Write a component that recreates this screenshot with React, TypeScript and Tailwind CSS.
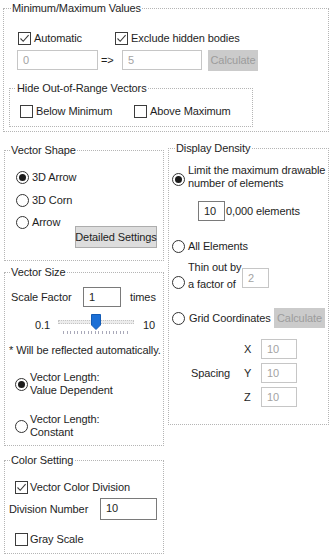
import React from 'react'

const Check = ({ checked }: { checked?: boolean }) => (
  <span className="flex h-[13px] w-[13px] shrink-0 items-center justify-center border border-[#3c3c3c] bg-white">
    {checked && (
      <svg width="11" height="11" viewBox="0 0 11 11">
        <path d="M1.5 5.5 L4.2 8.3 L9.6 2.2" fill="none" stroke="#3c3c3c" strokeWidth="1.1" />
      </svg>
    )}
  </span>
)

const Radio = ({ checked, className = '' }: { checked?: boolean; className?: string }) => (
  <span className={`flex h-[13px] w-[13px] shrink-0 items-center justify-center rounded-full border border-[#333] bg-white ${className}`}>
    {checked && <span className="h-[7px] w-[7px] rounded-full bg-[#1c1c1c]" />}
  </span>
)

const Field = ({ value, className = '', disabled }: { value: string; className?: string; disabled?: boolean }) => (
  <div
    className={`flex shrink-0 items-center bg-white pl-[5px] ${
      disabled ? 'border border-[#c6c6c6] text-[#a3a3a3]' : 'border border-[#7a7a7a] text-[#1e1e1e]'
    } ${className}`}
  >
    {value}
  </div>
)

const CalcButton = ({ className = '' }: { className?: string }) => (
  <div className={`flex shrink-0 items-center justify-center bg-[#cbcbcb] text-[#9c9c9c] ${className}`}>Calculate</div>
)

const Slider = () => (
  <div className="relative h-[20px] w-[76px] shrink-0">
    <div className="absolute left-0 top-[5px] h-[4px] w-[76px] border border-dotted border-[#c4c4c4] bg-[#ececec]" />
    <svg className="absolute left-[33px] top-[-1px]" width="10" height="16" viewBox="0 0 10 16">
      <path d="M0.5 0.5 H9.5 V11 L5 15.5 L0.5 11 Z" fill="#1b6fd6" stroke="#125bb5" />
    </svg>
    <div className="absolute left-[5px] top-[16px] flex w-[65px] justify-between">
      {Array.from({ length: 19 }).map((_, i) => (
        <span key={i} className="h-[3px] w-[1px] bg-[#a9a9b9]" />
      ))}
    </div>
  </div>
)

const box = 'min-w-0 border border-dotted border-[#b5b5b5]'

export default function App() {
  return (
    <div className="h-[557px] w-[335px] overflow-hidden whitespace-nowrap bg-white text-[11px] leading-[15px] tracking-[-0.1px] text-[#1e1e1e] [font-family:'Liberation_Sans',sans-serif]">
      {/* Minimum/Maximum Values */}
      <fieldset className={`ml-[3px] h-[132px] w-[326px] ${box}`}>
        <legend className="ml-[7px] px-[1px] leading-[16px]">Minimum/Maximum Values</legend>
        <div className="mt-[15px] flex h-[15px] items-center">
          <label className="ml-[14px] flex w-[97px] items-center gap-[3px]">
            <Check checked />
            Automatic
          </label>
          <label className="flex items-center gap-[3px]">
            <Check checked />
            Exclude hidden bodies
          </label>
        </div>
        <div className="mt-[4px] flex h-[20px] items-center">
          <Field value="0" disabled className="ml-[13px] h-[20px] w-[81px]" />
          <span className="w-[24px] pl-[3px]">=&gt;</span>
          <Field value="5" disabled className="h-[20px] w-[80px]" />
          <CalcButton className="ml-[6px] h-[21px] w-[50px]" />
        </div>
        <fieldset className={`ml-[5px] mt-[10px] h-[47px] w-[244px] ${box}`}>
          <legend className="ml-[6px] px-[1px] leading-[16px]">Hide Out-of-Range Vectors</legend>
          <div className="mt-[8px] flex h-[15px] items-center">
            <label className="ml-[10px] flex w-[114px] items-center gap-[3px]">
              <Check />
              Below Minimum
            </label>
            <label className="flex items-center gap-[3px]">
              <Check />
              Above Maximum
            </label>
          </div>
        </fieldset>
      </fieldset>

      <div className="mt-[8px] flex">
        {/* Left column */}
        <div className="ml-[4px] flex w-[160px] shrink-0 flex-col">
          <fieldset className={`mt-[2px] flex h-[119px] flex-col ${box}`}>
            <legend className="ml-[5px] px-[1px] leading-[16px]">Vector Shape</legend>
            <label className="ml-[11px] mt-[12px] flex h-[15px] items-center gap-[3px]">
              <Radio checked />
              3D Arrow
            </label>
            <label className="ml-[11px] mt-[8px] flex h-[15px] items-center gap-[3px]">
              <Radio />
              3D Corn
            </label>
            <label className="ml-[11px] mt-[7px] flex h-[15px] items-center gap-[3px]">
              <Radio />
              Arrow
            </label>
            <div className="ml-[70px] mt-[-4px] flex h-[22px] w-[82px] items-center justify-center border border-[#adadad] bg-[#dddddd]">
              Detailed Settings
            </div>
          </fieldset>

          <fieldset className={`mt-[3px] flex h-[182px] flex-col ${box}`}>
            <legend className="ml-[5px] px-[1px] leading-[16px]">Vector Size</legend>
            <div className="mt-[7px] flex h-[20px] items-center">
              <span className="ml-[6px] w-[72px]">Scale Factor</span>
              <Field value="1" className="h-[20px] w-[38px]" />
              <span className="ml-[9px]">times</span>
            </div>
            <div className="mt-[8px] flex h-[20px] items-start leading-[20px]">
              <span className="ml-[30px] w-[23px]">0.1</span>
              <Slider />
              <span className="ml-[9px]">10</span>
            </div>
            <div className="ml-[4px] mt-[8px]">* Will be reflected automatically.</div>
            <label className="ml-[10px] mt-[13px] flex items-center gap-[2px] leading-[13px]">
              <Radio checked />
              <span>
                Vector Length:
                <br />
                Value Dependent
              </span>
            </label>
            <label className="ml-[10px] mt-[16px] flex items-center gap-[2px] leading-[13px]">
              <Radio />
              <span>
                Vector Length:
                <br />
                Constant
              </span>
            </label>
          </fieldset>

          <fieldset className={`mt-[6px] flex h-[102px] flex-col ${box}`}>
            <legend className="ml-[5px] px-[1px] leading-[16px]">Color Setting</legend>
            <label className="ml-[10px] mt-[12px] flex h-[15px] items-center gap-[2px]">
              <Check checked />
              Vector Color Division
            </label>
            <div className="mt-[3px] flex h-[22px] items-center">
              <span className="ml-[4px] w-[91px]">Division Number</span>
              <Field value="10" className="h-[22px] w-[57px] !items-start pt-[2px]" />
            </div>
            <label className="ml-[10px] mt-[12px] flex h-[15px] items-center gap-[2px]">
              <Check />
              Gray Scale
            </label>
          </fieldset>
        </div>

        {/* Right column */}
        <fieldset className={`ml-[4px] flex h-[285px] w-[161px] shrink-0 flex-col ${box}`}>
          <legend className="ml-[6px] px-[1px] leading-[16px]">Display Density</legend>
          <label className="ml-[3px] mt-[8px] flex items-start gap-[3px] leading-[13px]">
            <Radio checked className="mt-[9px]" />
            <span>
              Limit the maximum drawable
              <br />
              number of elements
            </span>
          </label>
          <div className="mt-[11px] flex h-[20px] items-center">
            <Field value="10" className="ml-[29px] h-[20px] w-[27px]" />
            <span className="ml-[1px]">0,000 elements</span>
          </div>
          <label className="ml-[3px] mt-[18px] flex h-[15px] items-center gap-[3px]">
            <Radio />
            All Elements
          </label>
          <div className="ml-[3px] mt-[5px] flex items-start">
            <Radio className="mt-[17px]" />
            <span className="ml-[3px] w-[54px] leading-[17px]">
              Thin out by
              <br />a factor of
            </span>
            <Field value="2" disabled className="mt-[9px] h-[20px] w-[27px]" />
          </div>
          <div className="ml-[3px] mt-[15px] flex h-[20px] items-center">
            <Radio />
            <span className="ml-[4px] w-[85px]">Grid Coordinates</span>
            <CalcButton className="h-[20px] w-[51px]" />
          </div>
          <div className="mt-[11px] flex items-center">
            <span className="ml-[22px] w-[53px]">Spacing</span>
            <div className="flex flex-col gap-[4px]">
              {['X', 'Y', 'Z'].map((axis) => (
                <div key={axis} className="flex h-[20px] items-center">
                  <span className="w-[17px]">{axis}</span>
                  <Field value="10" disabled className="h-[20px] w-[36px]" />
                </div>
              ))}
            </div>
          </div>
        </fieldset>
      </div>
    </div>
  )
}
